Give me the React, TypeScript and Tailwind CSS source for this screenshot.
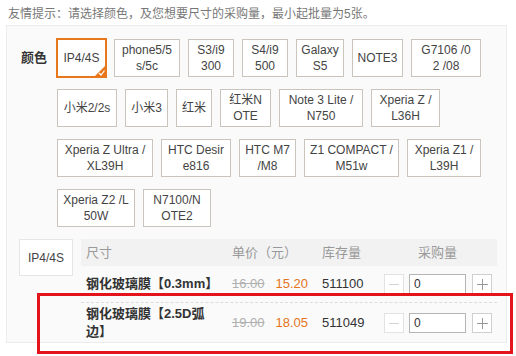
const colors: { lines: string[]; w: number }[][] = [
  [
    { lines: ["IP4/4S"], w: 49 },
    { lines: ["phone5/5", "s/5c"], w: 66 },
    { lines: ["S3/i9", "300"], w: 46 },
    { lines: ["S4/i9", "500"], w: 46 },
    { lines: ["Galaxy", "S5"], w: 48 },
    { lines: ["NOTE3"], w: 51 },
    { lines: ["G7106 /0", "2 /08"], w: 70 },
  ],
  [
    { lines: ["小米2/2s"], w: 60 },
    { lines: ["小米3"], w: 43 },
    { lines: ["红米"], w: 36 },
    { lines: ["红米N", "OTE"], w: 51 },
    { lines: ["Note 3 Lite /", "N750"], w: 84 },
    { lines: ["Xperia Z /", "L36H"], w: 69 },
  ],
  [
    { lines: ["Xperia Z Ultra /", "XL39H"], w: 96 },
    { lines: ["HTC Desir", "e816"], w: 70 },
    { lines: ["HTC M7", "/M8"], w: 57 },
    { lines: ["Z1 COMPACT /", "M51w"], w: 95 },
    { lines: ["Xperia Z1 /", "L39H"], w: 74 },
  ],
  [
    { lines: ["Xperia Z2 /L", "50W"], w: 78 },
    { lines: ["N7100/N", "OTE2"], w: 68 },
  ],
];

const rows = [
  { name: ["钢化玻璃膜【0.3mm】"], old: "16.00", price: "15.20", stock: "511100", h: "h-[37px]" },
  { name: ["钢化玻璃膜【2.5D弧", "边】"], old: "19.00", price: "18.05", stock: "511049", h: "h-[40px]" },
];

function Stepper() {
  return (
    <div className="flex items-center">
      <div className="w-[20px] h-[20px] border border-[#e3e3e3] bg-white flex items-center justify-center">
        <svg width="10" height="10" viewBox="0 0 10 10">
          <line x1="0" y1="5.5" x2="10" y2="5.5" stroke="#d4d4d4" strokeWidth="1" />
        </svg>
      </div>
      <div className="ml-[5px] w-[57px] h-[20px] border border-[#b5b5b5] bg-white pl-[4px] text-[12px] leading-[18px] text-[#333]">
        0
      </div>
      <div className="ml-[6px] w-[20px] h-[20px] border border-[#cfcfcf] bg-white flex items-center justify-center">
        <svg width="11" height="11" viewBox="0 0 11 11">
          <line x1="0" y1="5.5" x2="11" y2="5.5" stroke="#9a9a9a" strokeWidth="1" />
          <line x1="5.5" y1="0" x2="5.5" y2="11" stroke="#9a9a9a" strokeWidth="1" />
        </svg>
      </div>
    </div>
  );
}

export default function App() {
  return (
    <div className="relative w-[516px] h-[356px] overflow-hidden bg-white font-['Liberation_Sans','Noto_Sans_CJK_SC',sans-serif]">
      <p className="h-[25px] pl-[8px] pt-[6px] text-[12px] leading-[16px] text-[#777]">
        友情提示：请选择颜色，及您想要尺寸的采购量，最小起批量为5张。
      </p>

      <div className="ml-[6px] w-[501px] h-[318px] bg-[#fafafa] border border-[#ececec]">
        <div className="flex pt-[13px]">
          <div className="w-[50px] pl-[14px] pt-[10px] text-[13px] leading-[18px] font-bold text-[#333]">颜色</div>
          <div className="w-[440px] flex flex-col gap-[12px]">
            {colors.map((line, i) => (
              <div key={i} className="flex gap-[8px]">
                {line.map((c, j) => {
                  const selected = i === 0 && j === 0;
                  return (
                    <div
                      key={c.lines.join("")}
                      style={{ width: c.w }}
                      className={
                        selected
                          ? "relative h-[38px] bg-white border border-[#e8771c] shadow-[0_0_0_1px_#e8771c] flex flex-col items-center justify-center text-[12px] leading-[16px] text-[#444] whitespace-nowrap"
                          : "h-[38px] bg-white border border-[#cbc4bd] flex flex-col items-center justify-center text-[12px] leading-[16px] text-[#444] whitespace-nowrap"
                      }
                    >
                      {c.lines.map((l) => (
                        <span key={l}>{l}</span>
                      ))}
                      {selected && (
                        <svg className="absolute right-[-1px] bottom-[-1px]" width="12" height="12" viewBox="0 0 12 12">
                          <polygon points="12,0 12,12 0,12" fill="#e8771c" />
                          <polyline points="5,8 7,10 10.5,5.5" fill="none" stroke="#fff" strokeWidth="1.2" />
                        </svg>
                      )}
                    </div>
                  );
                })}
              </div>
            ))}
          </div>
        </div>

        <div className="flex gap-[8px] pl-[12px] pt-[12px]">
          <div className="w-[54px] h-[37px] bg-white border border-[#e6e6e6] flex items-center justify-center text-[12px] text-[#444]">
            IP4/4S
          </div>
          <div className="w-[416px]">
            <div className="h-[27px] bg-[#f2f2f2] flex items-center text-[13px] text-[#999]">
              <div className="w-[151px] pl-[5px]">尺寸</div>
              <div className="w-[90px]">单价（元）</div>
              <div className="w-[62px]">库存量</div>
              <div className="w-[113px] pl-[34px]">采购量</div>
            </div>
            {rows.map((r, i) => (
              <div
                key={r.stock}
                className={
                  i === 0
                    ? "h-[37px] flex items-center border-b border-dashed border-[#dcdcdc]"
                    : "h-[40px] flex items-center"
                }
              >
                <div className="w-[151px] pl-[5px] text-[13px] leading-[18px] font-bold text-[#333]">
                  {r.name.map((n) => (
                    <div key={n}>{n}</div>
                  ))}
                </div>
                <div className="w-[90px] text-[13px] whitespace-nowrap">
                  <span className="text-[#b0b0b0] line-through">{r.old}</span>
                  <span className="ml-[11px] text-[#e5751a]">{r.price}</span>
                </div>
                <div className="w-[62px] text-[13px] text-[#333]">{r.stock}</div>
                <Stepper />
              </div>
            ))}
          </div>
        </div>
      </div>

      <div className="absolute left-[37px] top-[293px] w-[476px] h-[61px] border-[3px] border-[#e3141b]" />
    </div>
  );
}
